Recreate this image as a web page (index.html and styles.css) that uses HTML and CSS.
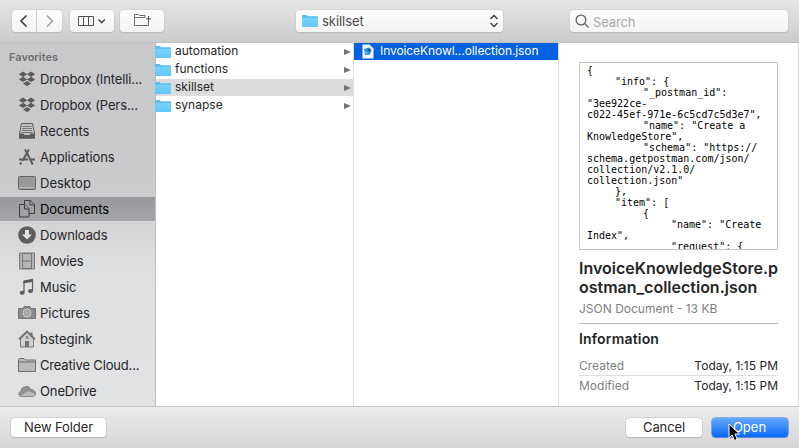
FILE: index.html
```html
<!DOCTYPE html>
<html lang="en">
<head>
<meta charset="utf-8">
<title>Open</title>
<link rel="stylesheet" href="styles.css">
</head>
<body>
<svg class="defs" width="0" height="0" aria-hidden="true">
  <defs>
    <linearGradient id="blue" x1="0" y1="0" x2="0" y2="1"><stop offset="0" stop-color="#79d2fb"/><stop offset="1" stop-color="#63c8f9"/></linearGradient>
    <symbol id="folder" viewBox="0 0 16 14"><path d="M0 2.2Q0 1 1 1h3.600l1.300 1.200H15q1 0 1 1V12q0 1-1 1H1q-1 0-1-1z" fill="#55bdf0"/><path d="M0 3.700h16V12q0 .7-1 .7H1Q0 12.700 0 12z" fill="url(#blue)"/></symbol>
    <symbol id="dropbox" viewBox="0 0 18 18"><path d="M5 1.500 9.200 4.200 5 6.900.8 4.200zM13 1.500l4.200 2.700L13 6.900 8.800 4.200zM5 6.700l4.200 2.700L5 12.100.8 9.400zM13 6.700l4.200 2.700-4.200 2.700-4.200-2.700zM9 11l4 2.500-4 2.700-4-2.700z" fill="#5c5c5e"/></symbol>
  </defs>
</svg>
<div class="dialog">
  <header class="toolbar">
    <div class="nav">
      <button class="tool back"><svg width="24" height="22" fill="none" stroke="#3f3f3f" stroke-width="1.700"><path d="M14.500 5.500 9 11l5.500 5.500"/></svg></button>
      <button class="tool forward"><svg width="25" height="22" fill="none" stroke="#a3a3a3" stroke-width="1.500"><path d="m10 5.500 5.500 5.500-5.500 5.500"/></svg></button>
    </div>
    <button class="tool view"><svg width="44" height="22" fill="none" stroke="#505050"><path d="M8.500 6.500h15v9h-15zM13.500 6.500v9M18.500 6.500v9"/><path d="m28.500 9.500 3.200 3 3.200-3" stroke-width="1.700"/></svg></button>
    <button class="tool new"><svg width="44" height="22" fill="none" stroke="#6c6c6c"><path d="M25 7.500V5.500h-5.500l-1-1h-4v11h14v-4M14.500 7.500h10.500"/><path d="M28.500 6v6M26 8.800h5" stroke="#505050"/></svg></button>
    <button class="tool location"><svg class="folder" width="16" height="14"><use href="#folder"/></svg><span>skillset</span><svg class="updown" width="10" height="14" fill="none" stroke="#444" stroke-width="1.500"><path d="m1.500 5 3.500-3.500L8.500 5M1.500 9 5 12.500 8.500 9"/></svg></button>
    <div class="tool search"><svg width="15" height="15" fill="none" stroke="#5d5d5d" stroke-width="1.200"><circle cx="6" cy="6" r="4.900"/><path d="m9.700 9.700 3.800 3.800"/></svg><span>Search</span></div>
  </header>

  <main class="browser">
    <nav class="sidebar">
      <h2>Favorites</h2>
      <ul>
        <li><svg class="icon"><use href="#dropbox"/></svg><span class="tight">Dropbox (Intelli...</span></li>
        <li><svg class="icon"><use href="#dropbox"/></svg><span class="tight">Dropbox (Pers...</span></li>
        <li><svg class="icon" viewBox="0 0 18 18"><path d="M3.500 1.500h11l2 10v4.500h-15v-4.500z" fill="#c4c4c6" stroke="#5c5c5e"/><path d="M4.500 4.500h9M4 6.500h10M4 8.500h10M3.500 10.500h11" stroke="#77777a"/><path d="M1 11.500h4.500l1 1.500h5l1-1.500H17v5H1z" fill="#5c5c5e"/></svg><span>Recents</span></li>
        <li><svg class="icon" viewBox="0 0 18 18" fill="none" stroke="#5c5c5e" stroke-width="2"><path d="M7 1.500 9 5l5.700 11.500M11 1.500 4.300 13M1 11.500h9M13 11.500h4M3.200 14.500 2 16.500"/></svg><span class="tight">Applications</span></li>
        <li><svg class="icon" viewBox="0 0 18 18"><rect x=".5" y="2.500" width="17" height="13" rx="1" fill="#99999b" stroke="#646466"/><path d="M1.500 13.500h15" stroke="#c5c5c6" stroke-dasharray="1.500 .7"/></svg><span>Desktop</span></li>
        <li class="selected"><svg class="icon" viewBox="0 0 18 18" fill="#a0a1a4" stroke="#3d3d3f"><path d="M6.500.5h6l4 4v9h-10z"/><path d="M12 .5v4.500h4.500"/><path d="M1.500 4.500h5.500l4 4v8.500h-9.500z"/><path d="M6.500 4.500v4.500h4.500"/></svg><span class="tight">Documents</span></li>
        <li><svg class="icon" viewBox="0 0 18 18"><circle cx="9" cy="9" r="8.800" fill="#5d5d5f"/><path d="M7 4h4v4.500h3l-5 5-5-5h3z" fill="#e1e1e2"/></svg><span class="tight">Downloads</span></li>
        <li><svg class="icon" viewBox="0 0 18 18"><path d="M1.500 1h15v16h-15z" fill="#a4a5a7" stroke="#77787a"/><path d="M4.500 1.500h9v15h-9z" fill="#b4b5b7" stroke="#77787a"/><path d="M4.500 9h9" stroke="#6c6c6e"/><path d="M3 2v15M15 2v15" stroke="#d6d6d8" stroke-width="1.200" stroke-dasharray="1.200 1.200"/></svg><span class="tight">Movies</span></li>
        <li><svg class="icon" viewBox="0 0 18 18"><path d="M5.500 2.500 15 .8v3L5.500 5.500z" fill="#5c5c5e"/><path d="M6 3v11M14.500 2v10.500" stroke="#5c5c5e" stroke-width="1.200"/><ellipse cx="4.200" cy="14.800" rx="2.500" ry="2" fill="#5c5c5e"/><ellipse cx="12.500" cy="13" rx="2.500" ry="2" fill="#5c5c5e"/></svg><span class="tight">Music</span></li>
        <li><svg class="icon" viewBox="0 0 18 18"><path d="M.5 4.500H5l1.200-2h5.600l1.200 2h4.500v10H.5z" fill="#88898b" stroke="#737476"/><circle cx="9" cy="9" r="4" fill="#999a9c" stroke="#d3d4d5"/><circle cx="9" cy="9" r="2.500" fill="#aaabad"/></svg><span>Pictures</span></li>
        <li><svg class="icon" viewBox="0 0 18 18"><path d="M2.500 9 9 2.500 15.500 9v8h-13z" fill="#d0d1d2" stroke="#77787a"/><path d="M12.500 2.500h2v4h-2z" fill="#68686a"/><path d="M.8 9.300 9 1.300l8.200 8" fill="none" stroke="#68686a" stroke-width="1.500"/><path d="M7 11h4v6H7z" fill="#737476"/><path d="M8 6.500h2v2H8z" fill="none" stroke="#737476" stroke-width=".8"/></svg><span>bstegink</span></li>
        <li><svg class="icon" viewBox="0 0 18 18" fill="#b9babc" stroke="#6d6e70"><path d="M.5 15.500v-12l.8-1H6l1.500 1.500h10v11.500z"/><path d="M.5 6h17"/></svg><span class="creative">Creative Cloud...</span></li>
        <li><svg class="icon" viewBox="0 0 18 18"><path d="M3.500 14.500C.5 14.500-.2 10.500 3 9c.5-3 2-4 4-4 2.500-1.500 5 0 5.500 2.500 3 0 5 2 5 4 0 2-1.300 3-3 3z" fill="#919294" stroke="#7c7d7f"/><path d="M2 13.700 11 9l6 3.500c-.5 1.500-1.500 1.700-3 1.700H4z" fill="#bbbcbe"/></svg><span class="tight">OneDrive</span></li>
      </ul>
    </nav>

    <section class="column folders">
      <div class="row"><svg class="folder" width="16" height="14"><use href="#folder"/></svg><span>automation</span><i></i></div>
      <div class="row"><svg class="folder" width="16" height="14"><use href="#folder"/></svg><span>functions</span><i></i></div>
      <div class="row current"><svg class="folder" width="16" height="14"><use href="#folder"/></svg><span>skillset</span><i></i></div>
      <div class="row"><svg class="folder" width="16" height="14"><use href="#folder"/></svg><span>synapse</span><i></i></div>
    </section>

    <section class="column files">
      <div class="row chosen"><svg width="12" height="15"><path d="M.5.5h7l4 4v10H.5z" fill="#f5f8fb"/><path d="M7.500.5v4h4z" fill="#c7d8e8"/><path d="m2 5 5-1.500L9.500 6 8 10.500 3 11z" fill="#2b8fdc"/><path d="m5 6 3-1.500.5 3z" fill="#123f6c"/><path d="m3 7.500 3 .5-2 2z" fill="#79c7f1"/></svg><span class="filename">InvoiceKnowl...ollection.json</span></div>
    </section>

    <section class="preview">
<pre class="code">{
	"info": {
		"_postman_id":
"3ee922ce-
c022-45ef-971e-6c5cd7c5d3e7",
		"name": "Create a
KnowledgeStore",
		"schema": "https://
schema.getpostman.com/json/
collection/v2.1.0/
collection.json"
	},
	"item": [
		{
			"name": "Create
Index",
			"request": {</pre>
      <h1><span>InvoiceKnowledgeStore.p</span><br><span class="second">ostman_collection.json</span></h1>
      <p class="kind">JSON Document - 13 KB</p>
      <h3>Information</h3>
      <dl>
        <div><dt>Created</dt><dd>Today, 1:15 PM</dd></div>
        <div><dt>Modified</dt><dd>Today, 1:15 PM</dd></div>
      </dl>
    </section>
  </main>

  <footer class="actions">
    <button class="button folderbutton">New Folder</button>
    <button class="button cancel">Cancel</button>
    <button class="button primary">Open</button>
  </footer>
</div>
<svg class="cursor" width="13" height="19"><path d="M1 1v14l3.200-3 2.300 5.500 2.700-1.200L7 11h4.500z" fill="#000" stroke="#fff"/></svg>
</body>
</html>
```

FILE: styles.css
```css
* { box-sizing: border-box; }
body { margin: 0; overflow: hidden; font: 13px/16px Inter, "Liberation Sans", sans-serif; color: #262626; }
.defs { position: absolute; }
.dialog { width: 799px; height: 448px; display: grid; grid-template-rows: 43px 363px 42px; }
h1, h2, h3, p, ul, dl, dd, pre { margin: 0; padding: 0; }
svg { display: block; flex: none; }
button { font: inherit; color: inherit; border: 0; padding: 0; }

.toolbar { display: flex; align-items: flex-start; padding: 10px 11px 0 12px; background: linear-gradient(#e6e6e6, #cbcbcb); border-bottom: 1px solid #c1c1c1; }
.tool { height: 22px; border-radius: 4px; background: linear-gradient(#fdfdfd, #f4f4f4); box-shadow: 0 0 0 .5px #c8c8c8, 0 1px 1px #aaa; display: flex; align-items: center; }
.nav { display: flex; gap: 1px; margin-right: 8px; }
.back { width: 24px; border-radius: 4px 0 0 4px; }
.forward { width: 25px; border-radius: 0 4px 4px 0; }
.view { width: 44px; margin-right: 6px; }
.new { width: 44px; margin-right: 132px; }
.location { width: 207px; padding: 0 4px 0 6px; margin-right: 67px; color: #4b4b4b; letter-spacing: -.05px; }
.location span { margin-left: 4px; }
.updown { margin-left: auto; }
.search { width: 218px; padding-left: 5px; color: #a9a9a9; letter-spacing: -.12px; }
.search span { margin-left: 3px; padding-top: 1px; }

.browser { display: grid; grid-template-columns: 156px 198px 205px 240px; background: #fff; }
.sidebar { background: linear-gradient(#c9c9cb 0, #cbcbcd 145px, #dedfe1 225px, #e1e2e4); border-right: 1px solid #bebebe; padding-top: 6px; }
h2 { font-size: 11px; line-height: 16px; font-weight: 600; color: #6c6c6e; padding-left: 9px; letter-spacing: 0; }
.sidebar ul { list-style: none; padding-top: 2px; }
.sidebar li { display: flex; align-items: center; height: 24px; margin-bottom: 2px; padding-left: 18px; white-space: nowrap; }
.tight { letter-spacing: -.11px; }
.creative { letter-spacing: -.17px; }
.icon { width: 18px; height: 18px; margin-right: 4px; }
.sidebar .selected { background: linear-gradient(#98999c, #a5a6a9); color: #000; }

.column { border-right: 1px solid #dedede; }
.row { display: flex; align-items: center; height: 17px; margin-bottom: 1px; white-space: nowrap; font-size: 12px; }
.row span { padding-bottom: 1px; letter-spacing: .02px; }
.row .filename { letter-spacing: -.08px; }
.row .folder { width: 16px; margin-left: -1px; margin-right: 4px; }
.row i { margin-left: auto; margin-right: 2px; border-left: 7px solid #727272; border-top: 3.500px solid transparent; border-bottom: 3.500px solid transparent; }
.current { background: #dcdcdc; }
.chosen { background: #0461e0; color: #fff; padding-left: 8px; }
.chosen svg { margin-right: 6px; }

.preview { padding: 19px 20px 0; border-right: 1px solid #d9d9d9; }
.code { width: 199px; height: 188px; padding: 2px 7px 0; border: 1px solid #c5c5c5; overflow: hidden; font: 10px/11px "DejaVu Sans Mono", monospace; tab-size: 28px; color: #000; }
h1 { margin-top: 9px; font-size: 16px; line-height: 19px; font-weight: 600; white-space: nowrap; }
.kind { margin-top: 3px; height: 24px; border-bottom: 1px solid #b9b9b9; color: #7f7f7f; font-size: 12px; line-height: 18px; }
h3 { font-size: 14px; line-height: 18px; font-weight: 600; margin-top: 6px; letter-spacing: .18px; }
dl { margin-top: 8px; font-size: 12px; }
dl div { display: flex; justify-content: space-between; height: 20px; line-height: 19px; }
dl div:first-child { border-bottom: 1px solid #dedede; }
dt { color: #7f7f7f; }
dd { letter-spacing: .02px; }

.actions { display: flex; padding: 11px 11px 0 11px; border-top: 1px solid #c3c3c3; background: linear-gradient(#ececec, #d6d6d6); }
.button { height: 19px; border-radius: 3.500px; background: #fff; box-shadow: 0 0 0 .5px #c0c0c0, 0 1px 1px #aaa; font-size: 13px; line-height: 19px; white-space: nowrap; }
.folderbutton { width: 95px; letter-spacing: -.1px; }
.cancel { width: 76px; margin-left: auto; margin-right: 10px; letter-spacing: -.1px; }
.primary { width: 76px; padding-right: 1px; color: #fff; background: linear-gradient(#66a9fb, #0969fb); box-shadow: 0 0 0 .5px #2575ed, 0 1px 1px #8d9bb4; }
.cursor { position: absolute; left: 728px; top: 423px; }
```
